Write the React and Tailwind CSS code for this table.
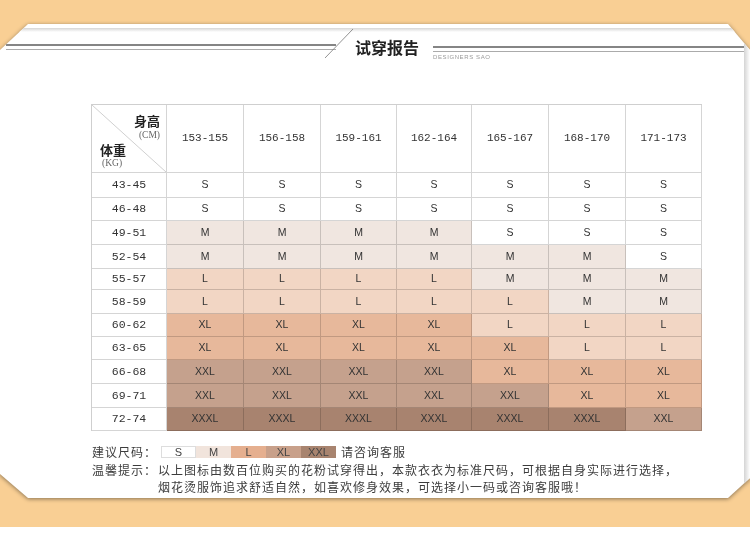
import React from "react";

const heights = ["153-155", "156-158", "159-161", "162-164", "165-167", "168-170", "171-173"];

const rows = [
  { w: "43-45", h: "h-[25px]", s: ["S", "S", "S", "S", "S", "S", "S"] },
  { w: "46-48", h: "h-[23px]", s: ["S", "S", "S", "S", "S", "S", "S"] },
  { w: "49-51", h: "h-[24px]", s: ["M", "M", "M", "M", "S", "S", "S"] },
  { w: "52-54", h: "h-[24px]", s: ["M", "M", "M", "M", "M", "M", "S"] },
  { w: "55-57", h: "h-[21px]", s: ["L", "L", "L", "L", "M", "M", "M"] },
  { w: "58-59", h: "h-[24px]", s: ["L", "L", "L", "L", "L", "M", "M"] },
  { w: "60-62", h: "h-[23px]", s: ["XL", "XL", "XL", "XL", "L", "L", "L"] },
  { w: "63-65", h: "h-[23px]", s: ["XL", "XL", "XL", "XL", "XL", "L", "L"] },
  { w: "66-68", h: "h-[24px]", s: ["XXL", "XXL", "XXL", "XXL", "XL", "XL", "XL"] },
  { w: "69-71", h: "h-[24px]", s: ["XXL", "XXL", "XXL", "XXL", "XXL", "XL", "XL"] },
  { w: "72-74", h: "h-[23px]", s: ["XXXL", "XXXL", "XXXL", "XXXL", "XXXL", "XXXL", "XXL"] },
];

const cellBg = {
  S: "bg-white",
  M: "bg-[#f0e6e0]",
  L: "bg-[#f2d6c4]",
  XL: "bg-[#e7b89b]",
  XXL: "bg-[#c5a18d]",
  XXXL: "bg-[#a8836f]",
};

const legend = [
  { t: "S", c: "bg-white border border-[#dddddd]" },
  { t: "M", c: "bg-[#f1e4dc]" },
  { t: "L", c: "bg-[#e5af8f]" },
  { t: "XL", c: "bg-[#c8a08a]" },
  { t: "XXL", c: "bg-[#a8846f]" },
];

const grid = "grid grid-cols-[75px_77px_77px_76px_75px_77px_77px_76px]";
const line = "border-r border-b border-[#0000002a]";

const Header = () => (
  <div className="flex h-[30px] items-center">
    <div className="ml-[6px] w-[330px]">
      <div className="h-[2px] bg-[#858585]" />
      <div className="mt-[3px] h-px bg-[#ababab]" />
    </div>
    <svg className="-ml-[11px] -mt-[6px] h-[30px] w-[30px] shrink-0" viewBox="0 0 30 30">
      <line x1="28" y1="0" x2="0" y2="29" stroke="#777" strokeWidth="0.8" />
    </svg>
    <div className="font-['Noto_Sans_CJK_SC',sans-serif] text-[16px] font-bold leading-[20px] text-[#222]">
      试穿报告
    </div>
    <div className="ml-[14px] mt-[14px] flex-1 self-start">
      <div className="h-[2px] bg-[#858585]" />
      <div className="mt-[3px] h-px bg-[#ababab]" />
      <div className="mt-[2px] font-['Liberation_Sans',sans-serif] text-[6px] leading-[7px] tracking-[0.6px] text-[#9a9a9a]">
        DESIGNERS SAO
      </div>
    </div>
  </div>
);

const SizeTable = () => (
  <div className="ml-[91px] w-[611px] border-l border-t border-[#cfcfcf]">
    <div className={`${grid} h-[68px]`}>
      <div className={`relative flex flex-col justify-between pt-[9px] pb-[3px] ${line}`}>
        <svg className="absolute inset-0 h-full w-full" viewBox="0 0 75 68" preserveAspectRatio="none">
          <line x1="0" y1="0" x2="75" y2="68" stroke="#cfcfcf" strokeWidth="1" />
        </svg>
        <div className="relative flex flex-col items-end pr-[6px]">
          <span className="font-['Noto_Sans_CJK_SC',sans-serif] text-[13px] font-bold leading-[14px] text-[#222]">身高</span>
          <span className="mt-[1px] font-['Liberation_Serif',serif] text-[9.5px] leading-[12px] text-[#666]">(CM)</span>
        </div>
        <div className="relative flex flex-col items-start pl-[8px]">
          <span className="font-['Noto_Sans_CJK_SC',sans-serif] text-[13px] font-bold leading-[14px] text-[#222]">体重</span>
          <span className="ml-[2px] font-['Liberation_Serif',serif] text-[9.5px] leading-[12px] text-[#666]">(KG)</span>
        </div>
      </div>
      {heights.map((h) => (
        <div key={h} className={`flex items-center justify-center font-['Liberation_Mono',monospace] text-[11px] text-[#333] ${line}`}>
          {h}
        </div>
      ))}
    </div>
    {rows.map((r) => (
      <div key={r.w} className={`${grid} ${r.h}`}>
        <div className={`flex items-center justify-center bg-white font-['Liberation_Mono',monospace] text-[11.5px] text-[#333] ${line}`}>
          {r.w}
        </div>
        {r.s.map((s, i) => (
          <div
            key={i}
            className={`flex items-center justify-center font-['Liberation_Sans',sans-serif] text-[10.5px] text-[#333] ${cellBg[s]} ${line}`}
          >
            {s}
          </div>
        ))}
      </div>
    ))}
  </div>
);

const Notes = () => (
  <div className="ml-[92px] mt-[12px] font-['Noto_Sans_CJK_SC',sans-serif] text-[12px] tracking-[1px] text-[#3c3c3c]">
    <div className="flex h-[18px] items-center">
      <span className="w-[69px] shrink-0">建议尺码：</span>
      {legend.map((l) => (
        <span
          key={l.t}
          className={`flex h-[12px] w-[35px] items-center justify-center font-['Liberation_Sans',sans-serif] text-[11px] tracking-normal text-[#444] ${l.c}`}
        >
          {l.t}
        </span>
      ))}
      <span className="ml-[5px]">请咨询客服</span>
    </div>
    <div className="flex leading-[17px]">
      <span className="w-[66px] shrink-0">温馨提示：</span>
      <div>
        <div className="whitespace-nowrap">以上图标由数百位购买的花粉试穿得出，本款衣衣为标准尺码，可根据自身实际进行选择，</div>
        <div className="whitespace-nowrap">烟花烫服饰追求舒适自然，如喜欢修身效果，可选择小一码或咨询客服哦！</div>
      </div>
    </div>
  </div>
);

export default function App() {
  return (
    <div className="h-[541px] w-[750px] overflow-hidden bg-white">
      <div className="h-[527px] bg-[#f9cf94] pt-[24px]">
        <div className="h-[474px] w-[750px] drop-shadow-[0_1px_2px_rgba(0,0,0,0.45)]">
          <div className="flex h-full bg-white [clip-path:polygon(28px_0,728px_0,100%_26px,100%_calc(100%_-_20px),calc(100%_-_22px)_100%,28px_100%,0_calc(100%_-_24px),0_26px)]">
            <div className="w-[744px]">
              <div className="mt-[4px] h-[4px] bg-gradient-to-b from-[#d6d6d6] to-white" />
              <Header />
              <div className="mt-[42px]">
                <SizeTable />
              </div>
              <Notes />
            </div>
            <div className="flex-1 bg-gradient-to-r from-[#d4d4d4] to-white" />
          </div>
        </div>
      </div>
    </div>
  );
}
